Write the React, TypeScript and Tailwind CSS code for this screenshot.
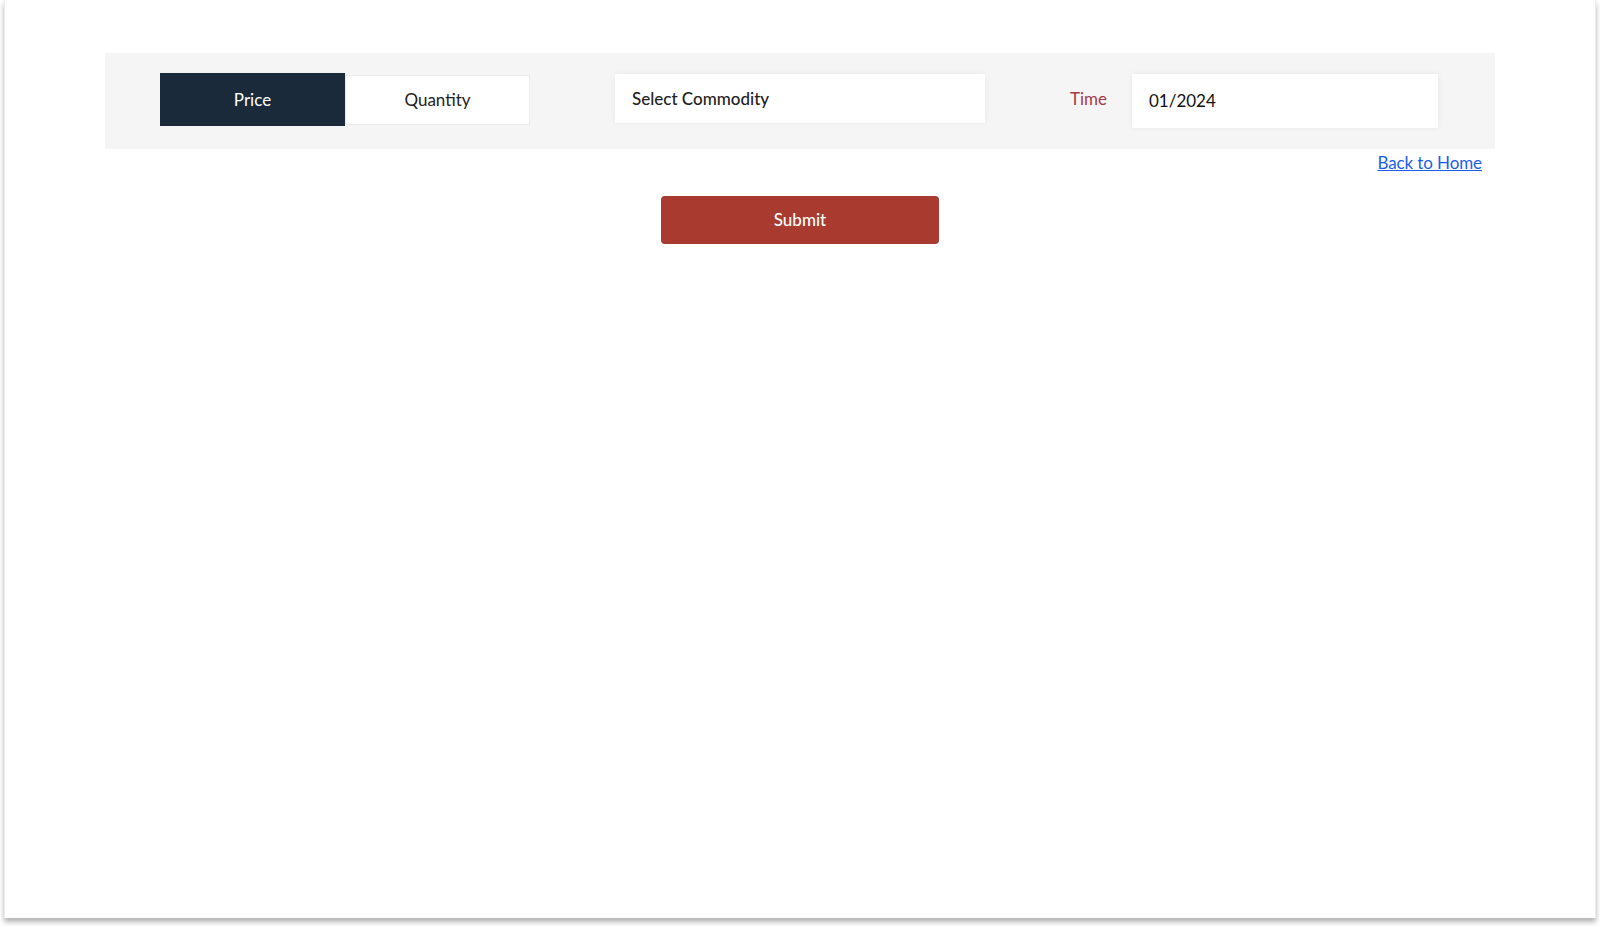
import React from "react";

export default function App() {
  return (
    <div className="w-[1600px] h-[928px] bg-white overflow-hidden" style={{ fontFamily: "Lato, 'Noto Sans', sans-serif" }}>
      <div className="mx-[4px] h-[918px] bg-white border-x border-[#ececec] shadow-[0_4px_5px_rgba(0,0,0,0.3)] pt-[53px]">
        <div className="ml-[100px] w-[1390px]">
          <div className="h-[96px] bg-[#f5f5f5] flex items-start pt-[20px] pl-[55px]">
            <div className="flex items-center">
              <button className="w-[185px] h-[53px] bg-[#1b2a3a] text-white text-[17px] flex items-center justify-center">
                Price
              </button>
              <button className="w-[185px] h-[50px] bg-white border border-[#ebebeb] text-[#222] text-[17px] flex items-center justify-center">
                Quantity
              </button>
            </div>
            <div className="ml-[85px] mt-[1px] w-[370px] h-[49px] bg-white shadow-[0_0_6px_rgba(0,0,0,0.06)] flex items-center pl-[17px] text-[17px] font-medium text-[#222]">
              Select Commodity
            </div>
            <div className="ml-[85px] h-[49px] mt-[1px] flex items-center text-[17px] text-[#a33a46] w-[62px]">
              Time
            </div>
            <div className="mt-[1px] w-[306px] h-[54px] bg-white shadow-[0_0_6px_rgba(0,0,0,0.06)] flex items-center pl-[17px] text-[17px] text-[#111]">
              01/2024
            </div>
          </div>
          <div className="flex justify-end pr-[13px] pt-[2px] h-[29px]">
            <a href="#" className="text-[17px] tracking-[-0.1px] text-[#1a5ee8] underline leading-[24px]">
              Back to Home
            </a>
          </div>
          <div className="flex justify-center pt-[18px] -ml-[100px] w-[1590px]">
            <button className="w-[278px] h-[48px] rounded-[4px] bg-[#a83a2f] text-white text-[17px] font-medium">
              Submit
            </button>
          </div>
        </div>
      </div>
    </div>
  );
}
